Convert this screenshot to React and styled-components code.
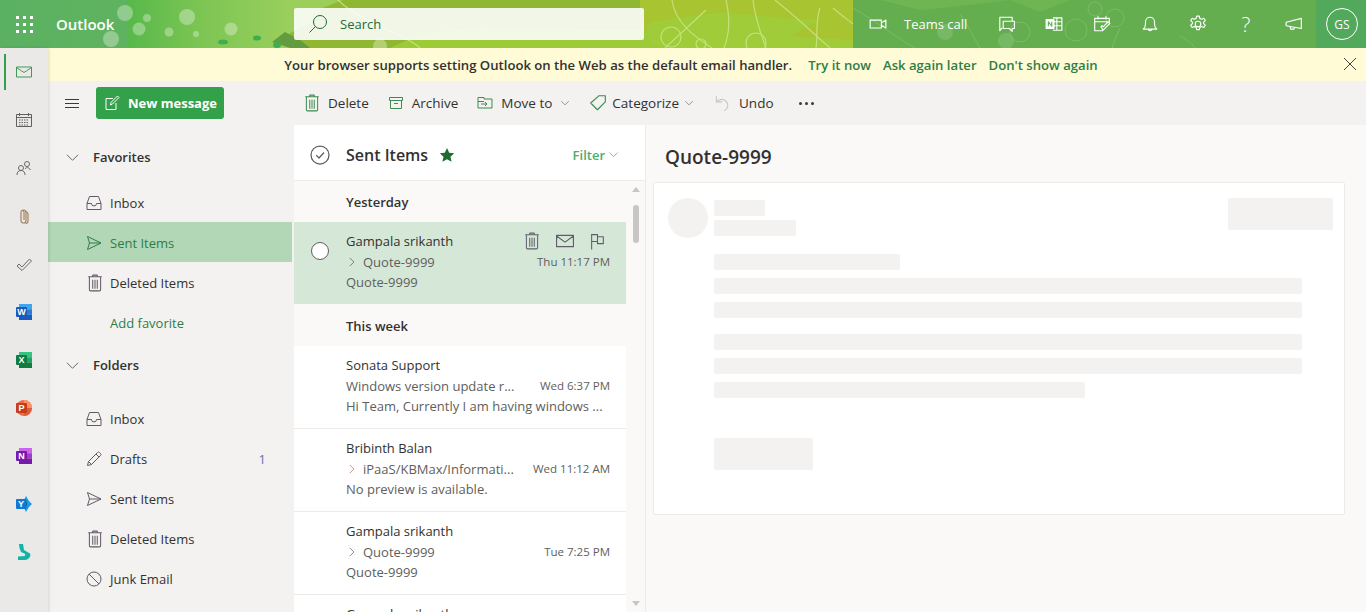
import React from "react";
import styled, { createGlobalStyle } from "styled-components";

const FONT = `"Open Sans", "Noto Sans", Arial, sans-serif`;

const GlobalStyle = createGlobalStyle`
    html, body{
        margin: 0;
        height: 100%;
        overflow: hidden;
        background: #faf9f8;
    }
    body{
        font-family: ${FONT};
        font-size: 13px;
        color: #201f1e;
    }
    *{
        box-sizing: border-box;
    }
`;

function Icon({ size = 16, color = "currentColor", width = 1, children }){
    return (
        <svg width={size} height={size} viewBox="0 0 16 16" fill="none" stroke={color} strokeWidth={width} strokeLinejoin="round" style={{ flex: "none", display: "block" }}>
            {children}
        </svg>
    );
}

const Trash = ({ size = 18, ...p }) => <Icon size={size} width={0.9} {...p}><path d="M6 2.5V1h4v1.500M2 2.500h12M3 2.500V14a1 1 0 0 0 1 1h8a1 1 0 0 0 1-1V2.500M6 5v8M8 5v8M10 5v8" /></Icon>;
const InboxIcon = (p) => <Icon {...p}><path d="M3.5 1.5h9L15 8.5v6H1v-6zM1 8.5h4.5a2.5 2.5 0 0 0 5 0H15" /></Icon>;
const Send = (p) => <Icon {...p}><path d="M1.5 1.5L15 8 1.5 14.5 3.5 8zM3.5 8H15" /></Icon>;
const Pencil = (p) => <Icon {...p}><path d="M1.5 14.5l1-4L11.5 1.5a1.4 1.4 0 0 1 2 0l1 1a1.4 1.4 0 0 1 0 2l-9 9zM2.5 10.5l3 3M10 3l3 3" /></Icon>;
const Ban = (p) => <Icon {...p}><circle cx="8" cy="8" r="7" /><path d="M3 3l10 10" /></Icon>;
const Chevron = (p) => <Icon {...p}><path d="M2 5l6 6 6-6" /></Icon>;
const ChevronRight = (p) => <Icon {...p}><path d="M5 2.5L10.5 8 5 13.5" /></Icon>;
const Mail = (p) => <Icon {...p}><path d="M.5 3h15v10H.5zM.5 3.5L8 9l7.5-5.5" /></Icon>;
const Flag = (p) => <Icon {...p}><path d="M2.5 15.5V1M2.5 1.5H8v2h5.5v6.5H8v-2H2.5M8 1.5v6.500" /></Icon>;
const ArchiveBox = (p) => <Icon {...p}><path d="M1.5 2.5h13v3h-13zM2.5 5.5v8h11v-8M6 8.5h4" /></Icon>;

function Waffle(){
    const dots = [];
    [0, 7, 14].forEach((y) => [0, 7, 14].forEach((x) => dots.push(<rect key={`${x}${y}`} x={x} y={y} width="3" height="3" />)));
    return <svg width="17" height="17" viewBox="0 0 17 17" fill="#fff">{dots}</svg>;
}

function HeaderArt(){
    return (
        <svg viewBox="0 0 1366 48" width="1366" height="48">
            <path d="M290 48L285 36 296 30 310 24 322 8 343 0H640V48z" fill="#8fb732" />
            <path d="M640 0H853V48H640z" fill="#a8c431" />
            <path d="M640 48L650 22 720 12 780 18 820 20 790 36 853 40V48z" fill="#9fcc38" />
            <path d="M290 48L272 42 285 32 300 40 310 48z" fill="#629c3f" />
            <path d="M390 48L420 34 480 28 640 30 660 48z" fill="#9dcb38" />
            <g fill="#3fae4e">
                <ellipse cx="223" cy="42" rx="5" ry="2.5" />
                <ellipse cx="257" cy="38" rx="4" ry="2.5" />
                <ellipse cx="277" cy="45" rx="4" ry="3" />
            </g>
            <g fill="#fff" opacity=".32">
                <circle cx="125" cy="13" r="8" />
                <circle cx="147" cy="18" r="4" />
                <circle cx="139" cy="29" r="6.5" />
                <circle cx="187" cy="17" r="8" />
                <circle cx="169" cy="32" r="4.5" />
                <circle cx="196" cy="34" r="3" />
                <circle cx="231" cy="29" r="6.5" />
                <circle cx="111" cy="39" r="8" />
                <circle cx="380" cy="46" r="7" />
            </g>
            <g fill="none" stroke="#d7eb95" strokeWidth="1.2" opacity=".7">
                <path d="M338 0C360 22 410 36 420 48M672 0C675 25 700 40 712 48M726 0C730 18 730 32 724 48M753 0C755 18 760 32 766 48M775 0C800 20 815 35 830 48M820 8C815 22 818 36 816 48M833 8C840 14 848 20 853 24M706 10L665 48" />
                <circle cx="671" cy="37" r="10" />
                <circle cx="701" cy="44" r="5" />
                <circle cx="756" cy="43" r="10" />
            </g>
            <path d="M853 0H1366V48H853z" fill="#64ae50" />
            <path d="M1316 0H1366V48H1316z" fill="#52a95c" />
            <path d="M880 0L920 10 960 6 1010 0 1040 12 1070 0z" fill="#6fb552" />
            <g fill="#fff" opacity=".12">
                <circle cx="945" cy="32" r="8" />
                <circle cx="1006" cy="41" r="8" />
            </g>
            <g fill="none" stroke="#9ccb84" strokeWidth="1" opacity=".45">
                <circle cx="1095" cy="9" r="7" />
                <circle cx="1115" cy="18" r="9" />
                <circle cx="1076" cy="30" r="11" />
                <circle cx="1020" cy="32" r="10" />
                <path d="M853 8C880 24 900 40 915 48M960 14C970 28 975 40 980 48M1120 28C1116 36 1114 42 1112 48M1180 36C1188 40 1192 44 1195 48" />
            </g>
        </svg>
    );
}

function OfficeIcon({ letter, dark, light, mid }){
    return (
        <svg width="16" height="16" viewBox="0 0 16 16">
            <rect x="3" y="0" width="13" height="5.5" fill={light} />
            <rect x="3" y="5.3" width="13" height="5.4" fill={mid} />
            <rect x="3" y="10.6" width="13" height="5.4" fill={dark} />
            <rect x="0" y="3" width="11" height="10" rx="1" fill={dark} />
            <text x="5.5" y="11.3" textAnchor="middle" fontSize="9" fontWeight="700" fontFamily="Liberation Sans, sans-serif" fill="#fff">{letter}</text>
        </svg>
    );
}

function PowerPointIcon(){
    return (
        <svg width="16" height="16" viewBox="0 0 16 16">
            <circle cx="8" cy="8" r="8" fill="#ed6c47" />
            <path d="M8 0a8 8 0 0 1 8 8H8z" fill="#ff8f6b" />
            <path d="M8 16a8 8 0 0 0 8-8H8z" fill="#d35230" opacity=".6" />
            <rect x="0" y="3" width="11" height="10" rx="1" fill="#c43e1c" />
            <text x="5.5" y="11.3" textAnchor="middle" fontSize="9" fontWeight="700" fontFamily="Liberation Sans, sans-serif" fill="#fff">P</text>
        </svg>
    );
}

function YammerIcon(){
    return (
        <svg width="16" height="16" viewBox="0 0 16 16">
            <path d="M10 0l3 5 3 3-3 3-3 5-2-4V4z" fill="#1b9de2" />
            <path d="M10 3l1 5-1 5-2-1V4z" fill="#0a5a9c" />
            <rect x="0" y="3" width="10" height="10" rx="1" fill="#0f78d4" />
            <text x="5" y="11.3" textAnchor="middle" fontSize="9" fontWeight="700" fontFamily="Liberation Sans, sans-serif" fill="#fff">Y</text>
        </svg>
    );
}

function BingIcon(){
    return (
        <svg width="16" height="16" viewBox="0 0 16 16">
            <path d="M3 0h4l1 6 6 3.5c1 2 0 4-2 5.500-1 .5-2 1-3 1H2v-3.500l6.500-.5c1-.5 1-1.500 0-2.500L5 8 3.500 4z" fill="#13b3a8" />
        </svg>
    );
}

const COMMANDS = [
    { label: "Delete", icon: <Trash color="#3d8b4f" />, gap: 7 },
    { label: "Archive", icon: <ArchiveBox color="#3d8b4f" />, gap: 8 },
    { label: "Move to", icon: <Icon color="#3d8b4f"><path d="M1 2.5h6V4h8v9H1zM1 6.5h6M4 9h6M8 7l2 2-2 2" /></Icon>, gap: 8, caret: true },
    { label: "Categorize", icon: <Icon size={18} color="#3d8b4f"><path d="M9 1.500h5.500V7l-7 7-6-6zM12 4h.01" /></Icon>, gap: 5, caret: true },
    { label: "Undo", icon: <Icon size={18} color="#c8c6c4"><path d="M3 2v5h5M3 7c3-3 7-3 9 0s1 6-2 8" /></Icon>, gap: 8 },
];

const FAVORITES = [
    { label: "Inbox", icon: <InboxIcon /> },
    { label: "Sent Items", icon: <Send color="#2f7d46" />, active: true },
    { label: "Deleted Items", icon: <Trash /> },
    { label: "Add favorite", link: true },
];

const FOLDERS = [
    { label: "Inbox", icon: <InboxIcon /> },
    { label: "Drafts", icon: <Pencil />, count: 1 },
    { label: "Sent Items", icon: <Send /> },
    { label: "Deleted Items", icon: <Trash /> },
    { label: "Junk Email", icon: <Ban /> },
    { label: "Archive", icon: <ArchiveBox /> },
];

const RAIL = [
    { key: "mail", active: true, icon: <Icon color="#3f9b58"><path d="M.5 3h15v10H.5zM.5 3.5L8 8.5l7.5-5" /></Icon> },
    { key: "calendar", icon: <Icon color="#5f5f5f"><path d="M3 8h10M3 10.500h10M3 13h10" strokeDasharray="1.500 1" /><path d="M.5 2.500h15v12H.5zM.5 5.500h15M3.500 1v3M12.500 1v3" /></Icon> },
    { key: "people", icon: <Icon color="#6a6a6a"><circle cx="5" cy="8" r="2.500" /><circle cx="11" cy="4" r="2.500" /><path d="M1 15c0-3 1.500-4.500 4-4.500s4 1.500 4 4.500M9 9c1-2 4-2 5.500 1" /></Icon> },
    { key: "files", icon: <Icon color="#a3845f" width={1.2}><path d="M5 4.500a2.500 2.500 0 0 1 5 0v8a2.500 2.500 0 0 1-5 0V4a1.500 1.500 0 0 1 3 0v8" /><path d="M10 3.500c1.500.5 2 1 2 2.500v7c0 1.500-1 2.500-2.500 2.500" /></Icon> },
    { key: "todo", icon: <Icon color="#6a6a6a"><path d="M1 10l2-2 3 3L13.500 3l2 2L6 14.500z" /></Icon> },
    { key: "word", icon: <OfficeIcon letter="W" dark="#185abd" mid="#2b7cd3" light="#41a5ee" /> },
    { key: "excel", icon: <OfficeIcon letter="X" dark="#107c41" mid="#21a366" light="#33c481" /> },
    { key: "ppt", icon: <PowerPointIcon /> },
    { key: "onenote", icon: <OfficeIcon letter="N" dark="#7719aa" mid="#9b3fc5" light="#ca64ea" /> },
    { key: "yammer", icon: <YammerIcon /> },
    { key: "bing", icon: <BingIcon /> },
];

const MESSAGES = [
    { group: "Yesterday" },
    { from: "Gampala srikanth", subject: "Quote-9999", time: "Thu 11:17 PM", preview: "Quote-9999", chevron: true, selected: true },
    { group: "This week" },
    { from: "Sonata Support", subject: "Windows version update r...", time: "Wed 6:37 PM", preview: "Hi Team, Currently I am having windows ..." },
    { from: "Bribinth Balan", subject: "iPaaS/KBMax/Informati...", time: "Wed 11:12 AM", preview: "No preview is available.", chevron: true, warm: true },
    { from: "Gampala srikanth", subject: "Quote-9999", time: "Tue 7:25 PM", preview: "Quote-9999", chevron: true },
    { from: "Gampala srikanth", subject: "Quote-9999", time: "Tue 7:20 PM", preview: "Quote-9999", chevron: true },
];

function NavRow({ label, icon, active, link, count }){
    return (
        <NavItem $active={active} $link={link}>
            <NavIcon>{icon}</NavIcon>
            <span>{label}</span>
            {count && <NavCount>{count}</NavCount>}
        </NavItem>
    );
}

function MessageRow({ from, subject, time, preview, chevron, selected, warm }){
    return (
        <Message $selected={selected}>
            {selected && <SelectCircle />}
            <FromLine>
                <span>{from}</span>
                {selected && (
                    <HoverActions>
                        <Trash color="#5f5c6b" />
                        <Mail color="#5f5c6b" size={18} />
                        <Flag color="#5f5c6b" size={17} />
                    </HoverActions>
                )}
            </FromLine>
            <SubjectLine>
                {chevron && <SubjectChevron $warm={warm}><ChevronRight size={12} /></SubjectChevron>}
                <Subject>{subject}</Subject>
                <Time>{time}</Time>
            </SubjectLine>
            <Preview>{preview}</Preview>
        </Message>
    );
}

export default function App(){
    return (
        <Page>
            <GlobalStyle />
            <TopBar>
                <ArtLayer aria-hidden="true"><HeaderArt /></ArtLayer>
                <WaffleCell><Waffle /></WaffleCell>
                <Brand>Outlook</Brand>
                <SearchBox>
                    <svg width="20" height="20" viewBox="0 0 20 20" fill="none" stroke="#1f6a3a" strokeWidth="1">
                        <circle cx="12" cy="8" r="6.5" />
                        <path d="M7.5 12.5L1.5 18.5" />
                    </svg>
                    <span>Search</span>
                </SearchBox>
                <TopActions>
                    <TeamsCall>
                        <Icon size={18} color="#fff"><path d="M1 4.500h10v7H1zM11 7l4-2.500v7L11 9" /></Icon>
                        <span>Teams call</span>
                    </TeamsCall>
                    <TopIcon><Icon size={18} color="#fff"><path d="M2.500 11V2h11v3M5.500 5.500h10V12h-2v2.500L11 12H5.500zM2.500 11v3l2-2.500" /></Icon></TopIcon>
                    <TopIcon>
                        <Icon size={18} color="#fff"><path d="M7 2.500h8v11H7M10.500 2.500v11M7 6h8M7 9.500h8" /><rect x="1" y="4" width="7" height="8" fill="#fff" /><path d="M3 10V6l3 4V6" stroke="#5fae52" /></Icon>
                    </TopIcon>
                    <TopIcon><Icon size={18} color="#fff"><path d="M9 14H1.500V3h13v4M1.500 6h13M4.500 1v3M11.500 1v3M7 10.500l2 3 6-6-1.500-1.500L9 10.500 8 9.500z" /></Icon></TopIcon>
                    <TopIcon><Icon size={18} color="#fff"><path d="M2 12.500c1.500-1 2-2 2-4.500V6a4 4 0 0 1 8 0v2c0 2.500.5 3.500 2 4.500zM6.500 12.500c0 2 3 2 3 0" /></Icon></TopIcon>
                    <TopIcon>
                        <Icon size={18} color="#fff">
                            <circle cx="8" cy="8" r="2.500" />
                            <path d="M6.800 1h2.400l.4 2 1.700.8 1.900-.9 1.300 2-1.500 1.400v1.400l1.500 1.400-1.300 2-1.900-.9-1.700.8-.4 2H6.800l-.4-2-1.700-.8-1.900.9-1.300-2 1.500-1.400V6.300L1.500 4.900l1.300-2 1.900.9 1.700-.8z" />
                        </Icon>
                    </TopIcon>
                    <TopGlyph>?</TopGlyph>
                    <TopIcon><Icon size={18} color="#fff"><path d="M1 6.500L14.500 3v9L1 9.500zM4.500 10l.5 2.500h3l.5-1.700" /></Icon></TopIcon>
                    <Avatar>GS</Avatar>
                </TopActions>
            </TopBar>
            <Body>
                <Rail>
                    {RAIL.map(({ key, icon, active }) => (
                        <RailItem key={key} $active={active}>{icon}</RailItem>
                    ))}
                </Rail>
                <Main>
                    <Banner>
                        <BannerText>Your browser supports setting Outlook on the Web as the default email handler.</BannerText>
                        <BannerLink>Try it now</BannerLink>
                        <BannerLink>Ask again later</BannerLink>
                        <BannerLink>Don't show again</BannerLink>
                        <BannerClose>
                            <svg width="12" height="12" viewBox="0 0 12 12" stroke="#4a3b45" strokeWidth="1"><path d="M0 0l12 12M12 0L0 12" /></svg>
                        </BannerClose>
                    </Banner>
                    <CommandBar>
                        <NavTools>
                            <Hamburger><span /><span /><span /></Hamburger>
                            <NewMessage>
                                <Icon size={16} color="#fff"><path d="M12 8v6.500H2v-11h7M6.500 10l.5-2.500L13.500 1 15 2.500 8.500 9z" /></Icon>
                                <span>New message</span>
                            </NewMessage>
                        </NavTools>
                        <Commands>
                            {COMMANDS.map(({ label, icon, caret, gap }) => (
                                <Command key={label} $gap={gap}>
                                    {icon}
                                    <span>{label}</span>
                                    {caret && <Chevron size={10} color="#605e5c" />}
                                </Command>
                            ))}
                            <Dots><i /><i /><i /></Dots>
                        </Commands>
                    </CommandBar>
                    <Panes>
                        <Nav>
                            <NavSection>
                                <Chevron size={15} color="#605e5c" />
                                <span>Favorites</span>
                            </NavSection>
                            <NavList>
                                {FAVORITES.map((item) => <NavRow key={item.label} {...item} />)}
                            </NavList>
                            <NavSection $second>
                                <Chevron size={15} color="#605e5c" />
                                <span>Folders</span>
                            </NavSection>
                            <NavList>
                                {FOLDERS.map((item) => <NavRow key={item.label} {...item} />)}
                            </NavList>
                        </Nav>
                        <ListPane>
                            <ListHeader>
                                <Icon size={20} color="#605e5c"><circle cx="8" cy="8" r="7.200" /><path d="M5 8.200l2.200 2.200L11.200 6" /></Icon>
                                <ListTitle>Sent Items</ListTitle>
                                <svg width="16" height="16" viewBox="0 0 16 16" fill="#1f6b30"><path d="M8 1l2.200 4.700 5 .6-3.700 3.500 1 5L8 12.300l-4.500 2.500 1-5L.8 6.300l5-.6z" /></svg>
                                <FilterButton>
                                    <span>Filter</span>
                                    <Chevron size={11} color="#4cae6c" />
                                </FilterButton>
                            </ListHeader>
                            <ListBody>
                                <Messages>
                                    {MESSAGES.map((m, i) => (
                                        m.group
                                            ? <GroupHeader key={i}>{m.group}</GroupHeader>
                                            : <MessageRow key={i} {...m} />
                                    ))}
                                </Messages>
                                <Scrollbar>
                                    <ArrowUp />
                                    <Thumb />
                                    <ArrowDown />
                                </Scrollbar>
                            </ListBody>
                        </ListPane>
                        <Reading>
                            <ReadingTitle>Quote-9999</ReadingTitle>
                            <Card>
                                <CardTop>
                                    <SkeletonAvatar />
                                    <SkeletonStack>
                                        <Skeleton $w={51} />
                                        <Skeleton $w={82} />
                                    </SkeletonStack>
                                    <SkeletonAction />
                                </CardTop>
                                <SkeletonBody>
                                    <Skeleton $w={186} />
                                    <Skeleton $w={588} />
                                    <Skeleton $w={588} />
                                    <ParagraphStart $w={588} />
                                    <Skeleton $w={588} />
                                    <Skeleton $w={371} />
                                    <SkeletonButton />
                                </SkeletonBody>
                            </Card>
                        </Reading>
                    </Panes>
                </Main>
            </Body>
        </Page>
    );
}

const Page = styled.div`
    display: flex;
    flex-direction: column;
    width: 100%;
    height: 100vh;
    overflow: hidden;
`;

const TopBar = styled.header`
    position: relative;
    display: flex;
    align-items: center;
    flex: none;
    height: 48px;
    color: #fff;
    overflow: hidden;
    background: linear-gradient(90deg, #5bb162 0, #5fb35f 127px, #58b84b 128px, #7cc553 200px, #9bcf5c 290px, #a2cb33 640px, #a9cb2e 853px);
`;

const ArtLayer = styled.div`
    position: absolute;
    inset: 0;
`;

const WaffleCell = styled.div`
    position: relative;
    display: flex;
    align-items: center;
    justify-content: center;
    width: 48px;
    height: 48px;
`;

const Brand = styled.div`
    position: relative;
    width: 246px;
    padding-left: 8px;
    font-size: 15px;
    font-weight: 600;
`;

const SearchBox = styled.div`
    position: relative;
    display: flex;
    align-items: center;
    gap: 12px;
    width: 350px;
    height: 32px;
    padding-left: 14px;
    border-radius: 2px;
    background: rgba(255, 255, 255, 0.88);
    color: #1f6a3a;
    font-size: 13px;
`;

const TopActions = styled.div`
    position: relative;
    display: flex;
    align-items: center;
    margin-left: auto;
    padding-right: 8px;
`;

const TeamsCall = styled.div`
    display: flex;
    align-items: center;
    gap: 17px;
    width: 113px;
    font-size: 13px;
    white-space: nowrap;
`;

const TopIcon = styled.div`
    display: flex;
    align-items: center;
    justify-content: center;
    width: 48px;
    height: 48px;
`;

const TopGlyph = styled(TopIcon)`
    font-size: 21px;
    font-weight: 300;
`;

const Avatar = styled.div`
    display: flex;
    align-items: center;
    justify-content: center;
    width: 32px;
    height: 32px;
    margin-left: 8px;
    border: 1px solid #fff;
    border-radius: 50%;
    font-size: 12px;
`;

const Body = styled.div`
    display: flex;
    flex: 1;
    min-height: 0;
`;

const Rail = styled.nav`
    position: relative;
    z-index: 1;
    flex: none;
    width: 48px;
    background: #ebe9e7;
    box-shadow: 1px 0 3px rgba(0, 0, 0, 0.12);
`;

const RailItem = styled.div`
    position: relative;
    display: flex;
    align-items: center;
    justify-content: center;
    height: 48px;

    ${({ $active }) => $active && `
        &::before{
            content: "";
            position: absolute;
            left: 4px;
            top: 6px;
            width: 2px;
            height: 36px;
            background: #33a04a;
        }
    `}
`;

const Main = styled.div`
    display: flex;
    flex-direction: column;
    flex: 1;
    min-width: 0;
`;

const Banner = styled.div`
    position: relative;
    display: flex;
    align-items: center;
    justify-content: center;
    gap: 12px;
    flex: none;
    height: 33px;
    padding-right: 32px;
    background: #fffbd6;
    font-size: 13.13px;
    font-weight: 600;
`;

const BannerText = styled.span`
    margin-right: 4px;
    color: #323130;
`;

const BannerLink = styled.span`
    color: #2f7d46;
`;

const BannerClose = styled.div`
    position: absolute;
    right: 10px;
    top: 10px;
    display: flex;
`;

const CommandBar = styled.div`
    display: flex;
    align-items: center;
    flex: none;
    height: 44px;
    background: #f3f2f1;
    font-size: 13.5px;
`;

const NavTools = styled.div`
    display: flex;
    align-items: center;
    width: 246px;
    padding-left: 17px;
`;

const Hamburger = styled.div`
    display: flex;
    flex-direction: column;
    gap: 3px;
    width: 14px;
    margin-right: 17px;

    span{
        height: 1px;
        background: #3b3a39;
    }
`;

const NewMessage = styled.div`
    display: flex;
    align-items: center;
    gap: 8px;
    width: 128px;
    height: 32px;
    padding-left: 8px;
    border-radius: 3px;
    background: #33a04a;
    color: #fff;
    font-size: 13px;
    font-weight: 700;
    white-space: nowrap;
`;

const Commands = styled.div`
    display: flex;
    align-items: center;
    gap: 19px;
    padding-left: 9px;
    color: #323130;
`;

const Command = styled.div`
    display: flex;
    align-items: center;
    gap: ${({ $gap }) => $gap}px;
    white-space: nowrap;
`;

const Dots = styled.div`
    display: flex;
    gap: 3px;
    margin-left: 6px;

    i{
        width: 3px;
        height: 3px;
        border-radius: 50%;
        background: #3b3a39;
    }
`;

const Panes = styled.div`
    display: flex;
    flex: 1;
    min-height: 0;
`;

const Nav = styled.div`
    flex: none;
    width: 246px;
    overflow: hidden;
    padding-top: 11px;
    background: #f3f2f1;
`;

const NavSection = styled.div`
    display: flex;
    align-items: center;
    gap: 13px;
    height: 42px;
    margin-bottom: ${({ $second }) => ($second ? "12px" : "4px")};
    padding-left: 17px;
    font-size: 13px;
    font-weight: 600;
    color: #323130;
`;

const NavList = styled.div`
    display: flex;
    flex-direction: column;
    width: 244px;
    margin-bottom: 2px;
`;

const NavItem = styled.div`
    display: flex;
    align-items: center;
    flex: none;
    height: 40px;
    padding: 1px 26px 0 38px;
    background: ${({ $active }) => ($active ? "#b2d7b6" : "transparent")};
    color: ${({ $active, $link }) => ($active || $link ? "#2f7d46" : "#323130")};
    font-size: 13px;
`;

const NavIcon = styled.span`
    display: flex;
    align-items: center;
    width: 24px;
    color: #5f5a66;
`;

const NavCount = styled.span`
    margin-left: auto;
    color: #6a6fb5;
`;

const ListPane = styled.div`
    display: flex;
    flex-direction: column;
    flex: none;
    width: 352px;
    border-right: 1px solid #edebe9;
    background: #fff;
`;

const ListHeader = styled.div`
    display: flex;
    align-items: center;
    flex: none;
    height: 56px;
    padding: 4px 26px 0 16px;
    border-bottom: 1px solid #edebe9;

    > svg:first-child{
        margin-right: 16px;
    }
`;

const ListTitle = styled.div`
    margin-right: 11px;
    font-size: 16px;
    font-weight: 600;
    color: #323130;
`;

const FilterButton = styled.div`
    display: flex;
    align-items: center;
    gap: 3px;
    margin-left: auto;
    color: #4cae6c;
    font-size: 13px;
    font-weight: 600;
`;

const ListBody = styled.div`
    display: flex;
    flex: 1;
    min-height: 0;
    background: #faf9f8;
`;

const Messages = styled.div`
    flex: 1;
    min-width: 0;
    overflow: hidden;
`;

const GroupHeader = styled.div`
    display: flex;
    align-items: center;
    height: 42px;
    padding: 2px 0 0 52px;
    background: #faf9f8;
    font-size: 13px;
    font-weight: 600;
    color: #323130;

    &:first-child{
        height: 41px;
        padding-top: 0;
    }
`;

const Message = styled.div`
    position: relative;
    height: 83px;
    padding: 9px 16px 0 52px;
    border-bottom: 1px solid #edebe9;
    background: ${({ $selected }) => ($selected ? "#d5e8d8" : "#fff")};
    color: #605e5c;
    font-size: 13px;
    line-height: 20.5px;

    ${({ $selected }) => $selected && `
        height: 82px;
        border-bottom: 0;
    `}
`;

const SelectCircle = styled.span`
    position: absolute;
    left: 17px;
    top: 20px;
    width: 18px;
    height: 18px;
    border: 1px solid #605e5c;
    border-radius: 50%;
    background: #fff;
`;

const FromLine = styled.div`
    display: flex;
    justify-content: space-between;
    align-items: center;
    height: 20.5px;
    color: #323130;
`;

const HoverActions = styled.div`
    display: flex;
    align-items: center;
    gap: 15px;
    margin-right: 4px;
`;

const SubjectLine = styled.div`
    display: flex;
    align-items: center;
`;

const SubjectChevron = styled.span`
    display: flex;
    width: 17px;
    color: ${({ $warm }) => ($warm ? "#b5705c" : "#605e5c")};
`;

const Subject = styled.span`
    flex: 1;
    min-width: 0;
    white-space: nowrap;
    overflow: hidden;
`;

const Time = styled.span`
    flex: none;
    margin-left: 8px;
    font-size: 11.5px;
`;

const Preview = styled.div`
    white-space: nowrap;
    overflow: hidden;
`;

const Scrollbar = styled.div`
    display: flex;
    flex-direction: column;
    align-items: center;
    flex: none;
    width: 19px;
    padding-top: 6px;
`;

const ArrowUp = styled.span`
    width: 0;
    height: 0;
    border-left: 4px solid transparent;
    border-right: 4px solid transparent;
    border-bottom: 5px solid #c8c6c4;
`;

const Thumb = styled.span`
    width: 6px;
    height: 38px;
    margin-top: 13px;
    border-radius: 3px;
    background: #c8c6c4;
`;

const ArrowDown = styled.span`
    width: 0;
    height: 0;
    margin-top: auto;
    margin-bottom: 6px;
    border-left: 4px solid transparent;
    border-right: 4px solid transparent;
    border-top: 5px solid #c8c6c4;
`;

const Reading = styled.div`
    flex: 1;
    min-width: 0;
    padding: 0 21px 0 7px;
    background: #faf9f8;
`;

const ReadingTitle = styled.div`
    display: flex;
    align-items: center;
    height: 57px;
    padding: 7px 0 0 12px;
    font-size: 19px;
    font-weight: 600;
    color: #323130;
`;

const Card = styled.div`
    height: 333px;
    padding: 15px 11px 0 14px;
    border: 1px solid #edebe9;
    border-radius: 2px;
    background: #fff;
`;

const CardTop = styled.div`
    display: flex;
    align-items: flex-start;
`;

const Skeleton = styled.div`
    width: ${({ $w }) => $w}px;
    height: 16px;
    border-radius: 2px;
    background: #f3f2f1;
`;

const SkeletonAvatar = styled.div`
    flex: none;
    width: 40px;
    height: 40px;
    border-radius: 50%;
    background: #f3f2f1;
`;

const SkeletonStack = styled.div`
    display: flex;
    flex-direction: column;
    gap: 4px;
    margin: 2px 0 0 6px;
`;

const SkeletonAction = styled(Skeleton)`
    width: 105px;
    height: 32px;
    margin-left: auto;
`;

const SkeletonBody = styled.div`
    display: flex;
    flex-direction: column;
    gap: 8px;
    margin: 16px 0 0 46px;
`;

const ParagraphStart = styled(Skeleton)`
    margin-top: 8px;
`;

const SkeletonButton = styled(Skeleton)`
    width: 99px;
    height: 32px;
    margin-top: 32px;
`;
